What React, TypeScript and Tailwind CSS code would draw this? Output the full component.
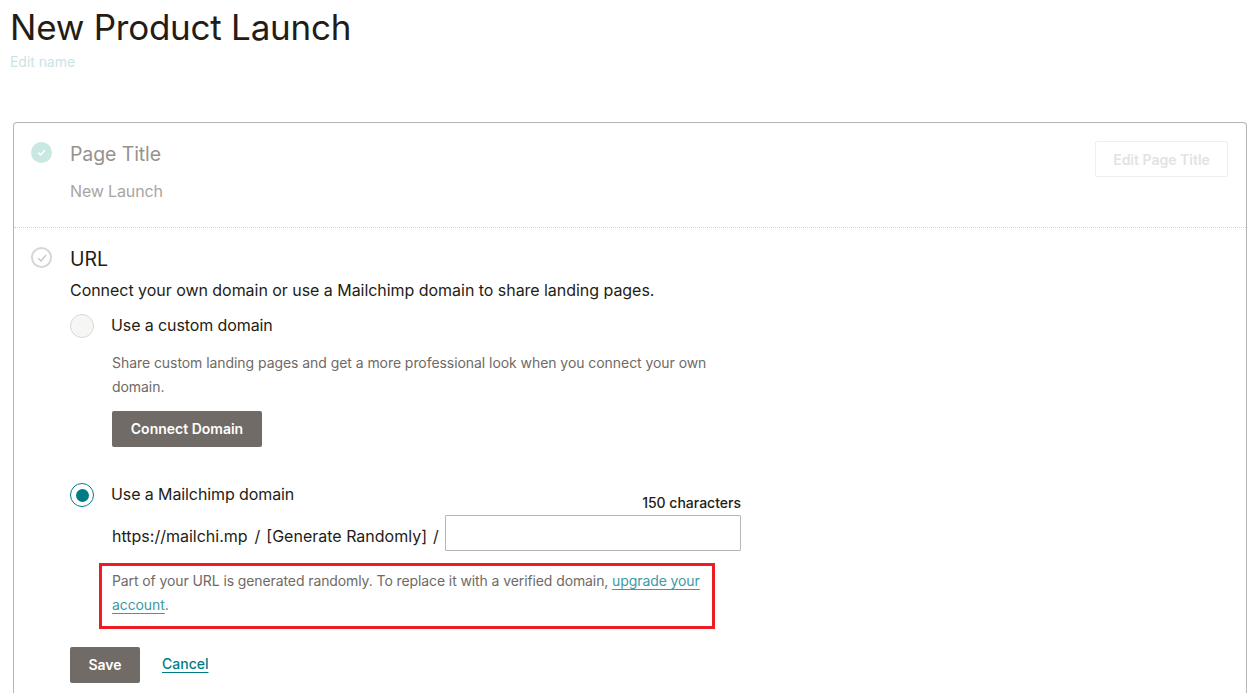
import React from "react";

const App = () => {
  return (
    <div className="h-[693px] w-[1259px] overflow-hidden bg-white font-['Inter',sans-serif] text-[#241c15]">
      <div className="h-[122px] pl-[10px]">
        <h1 className="pt-[6px] text-[35px] leading-[42px] tracking-[-0.24px]">New Product Launch</h1>
        <a className="mt-[5px] block text-[14px] leading-[18px] tracking-[-0.05px] text-[#c9e4e6]">Edit name</a>
      </div>

      <div className="ml-[13px] h-[571px] w-[1234px] rounded-t-[4px] border border-b-0 border-[#b5b5b5]">
        <section className="flex h-[105px] border-b border-dotted border-[#d4d4d4] pl-[17px] pr-[18px]">
          <div className="mt-[19px] flex h-[21px] w-[21px] items-center justify-center rounded-full bg-[#c9e8e2]">
            <svg width="11" height="11" viewBox="0 0 12 12" fill="none" stroke="#fff" strokeWidth="1.8">
              <path d="M2.5 6.2 5 8.6 9.6 3.6" />
            </svg>
          </div>
          <div className="ml-[18px] flex-1">
            <h2 className="mt-[18px] text-[19.5px] leading-[26px] tracking-[-0.1px] text-[#96928f]">Page Title</h2>
            <p className="mt-[13px] text-[16px] leading-[22px] tracking-[-0.15px] text-[#a8a5a2]">New Launch</p>
          </div>
          <button className="mt-[18px] h-[36px] w-[133px] rounded-[2px] border border-[#efefef] text-[14px] font-semibold text-[#e3e3e3]">
            Edit Page Title
          </button>
        </section>

        <section className="flex pl-[17px]">
          <div className="mt-[19px] flex h-[21px] w-[21px] items-center justify-center rounded-full border-2 border-[#d6d6d6]">
            <svg width="12" height="12" viewBox="0 0 12 12" fill="none" stroke="#c4c4c4" strokeWidth="1.3">
              <path d="M2.2 6.2 5 9 10 3" />
            </svg>
          </div>
          <div className="ml-[18px] w-[671px]">
            <h2 className="mt-[18px] text-[19.5px] leading-[26px]">URL</h2>
            <p className="mt-[7px] text-[16px] leading-[22px] tracking-[-0.04px]">Connect your own domain or use a Mailchimp domain to share landing pages.</p>

            <label className="mt-[13px] flex h-[24px] items-center">
              <span className="h-[24px] w-[24px] rounded-full border border-[#d8d8d8] bg-[#f6f6f4]" />
              <span className="ml-[17px] pb-[2px] text-[16px] tracking-[-0.1px]">Use a custom domain</span>
            </label>
            <div className="ml-[42px]">
              <p className="mt-[13px] w-[610px] text-[14px] leading-[24px] tracking-[-0.06px] text-[#6f6a66]">
                Share custom landing pages and get a more professional look when you connect your own domain.
              </p>
              <button className="mt-[12px] h-[36px] w-[150px] rounded-[2px] bg-[#706b66] pb-[2px] text-[14px] font-semibold text-white">
                Connect Domain
              </button>
            </div>

            <label className="mt-[36px] flex h-[24px] items-center">
              <span className="flex h-[24px] w-[24px] items-center justify-center rounded-full border-[1.5px] border-[#007c89]">
                <span className="h-[13px] w-[13px] rounded-full bg-[#007c89]" />
              </span>
              <span className="ml-[17px] pb-[2px] text-[16px] tracking-[-0.1px]">Use a Mailchimp domain</span>
            </label>

            <div className="ml-[42px]">
              <p className="-mt-[13px] text-right text-[14px] font-medium leading-[18px]">150 characters</p>
              <div className="mt-[3px] flex h-[36px] items-center text-[16px]">
                <span className="pt-[5px]">https://mailchi.mp</span>
                <span className="ml-[7px] pt-[5px]">/</span>
                <span className="ml-[6px] pt-[5px]">[Generate Randomly]</span>
                <span className="ml-[6px] pt-[5px]">/</span>
                <input className="ml-[6px] h-[36px] flex-1 rounded-[1px] border border-[#b5b5b5] bg-white" />
              </div>
            </div>

            <div className="ml-[29px] mt-[12px] h-[66px] w-[616px] border-[3px] border-[#ed1c24] pl-[10px] pt-[3px]">
              <p className="w-[600px] text-[14px] leading-[24px] tracking-[-0.1px] text-[#6f6a66]">
                Part of your URL is generated randomly. To replace it with a verified domain,{" "}
                <a className="text-[#3d9aa3] underline underline-offset-[3px]">upgrade your</a>{" "}
                <a className="text-[#3d9aa3] underline underline-offset-[3px]">account</a>.
              </p>
            </div>

            <div className="mt-[18px] flex items-center">
              <button className="h-[36px] w-[70px] rounded-[2px] bg-[#706b66] pb-[2px] text-[14px] font-semibold text-white">Save</button>
              <a className="ml-[22px] -mt-[3px] text-[14px] font-medium text-[#007c89] underline underline-offset-[3px]">Cancel</a>
            </div>
          </div>
        </section>
      </div>
    </div>
  );
};

export default App;
